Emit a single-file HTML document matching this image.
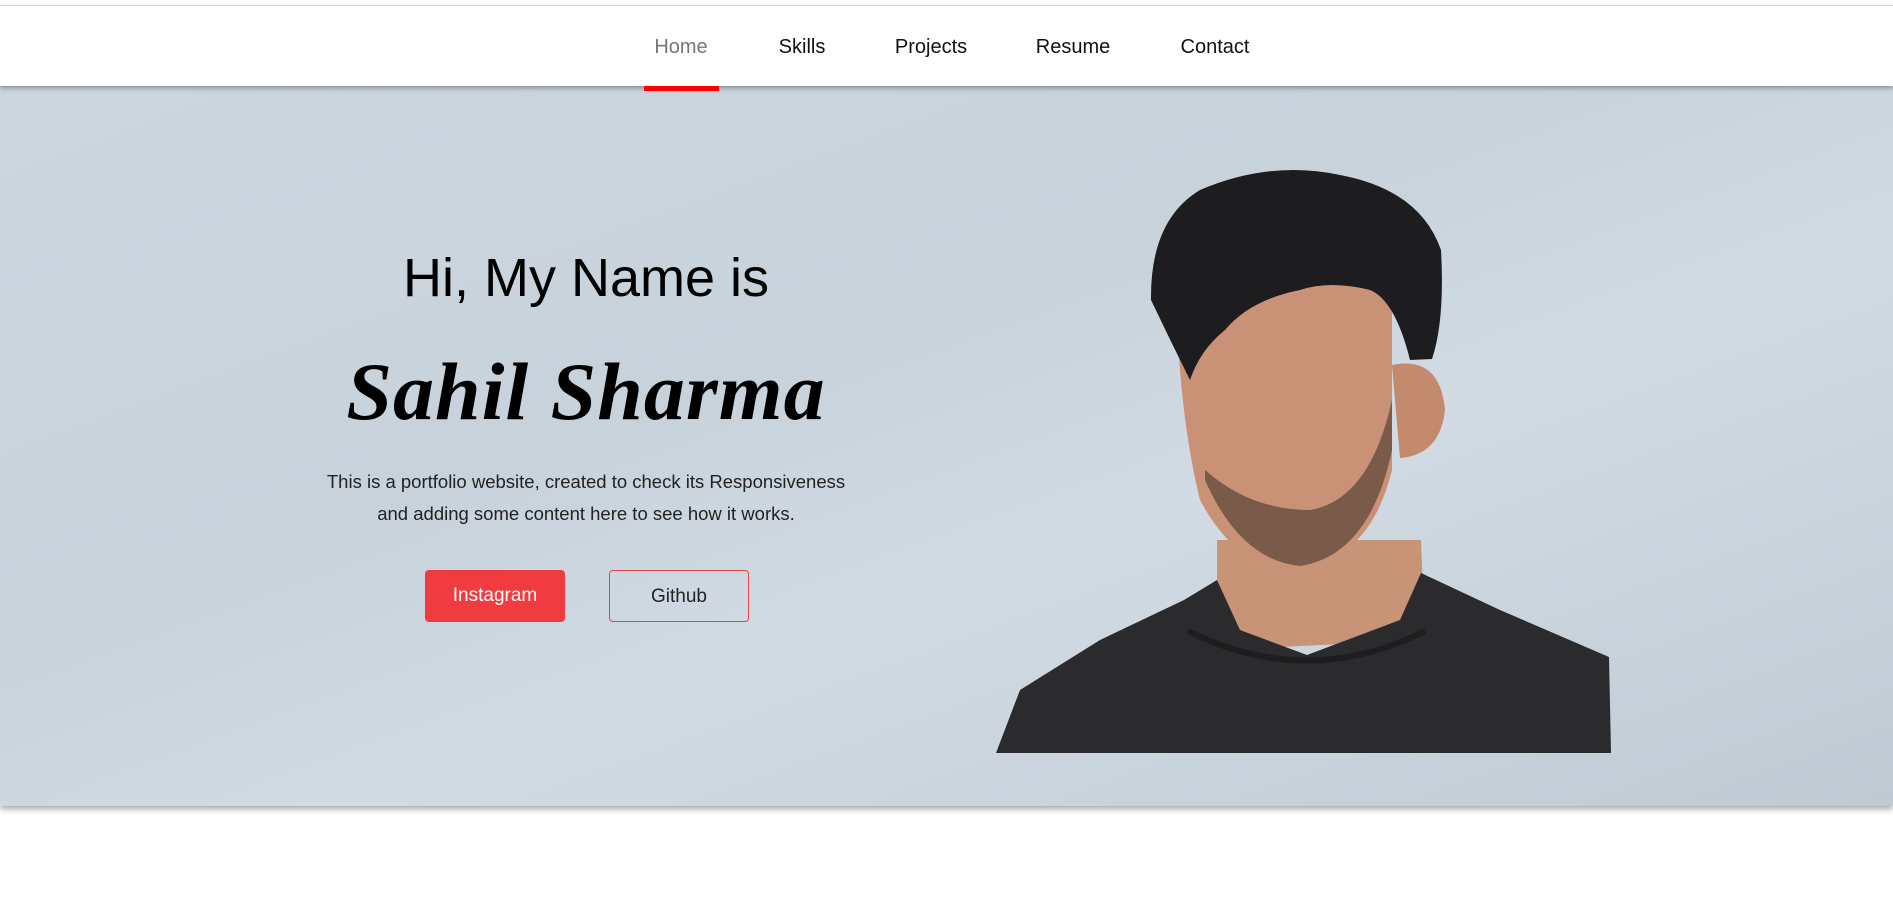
<!DOCTYPE html>
<html><head><meta charset="utf-8"><style>
html,body{margin:0;padding:0;width:1893px;height:915px;overflow:hidden;background:#fff;font-family:"Liberation Sans",sans-serif}
.topline{position:absolute;left:0;top:5px;width:1893px;height:1px;background:#ddd}
nav{position:absolute;left:0;top:6px;width:1893px;height:80px;background:#fff;z-index:3;box-shadow:0 2px 5px rgba(0,0,0,.35)}
nav a{position:absolute;top:30px;font-size:20px;color:#111;text-decoration:none;transform:translateX(-50%)}
.ul{position:absolute;left:644px;top:86px;width:75px;height:5px;background:#f00;z-index:4}
.hero{position:absolute;left:0;top:86px;width:1893px;height:720px;background:linear-gradient(160deg,#cdd6df 0%,#c8d2db 40%,#d2dbe4 60%,#bfcad4 100%);box-shadow:0 3px 6px rgba(0,0,0,.35)}
.t{position:absolute;left:0;width:1172px;text-align:center;color:#000}
.btn{position:absolute;top:570px;height:52px;line-height:52px;text-align:center;font-size:19px;border-radius:4px;box-sizing:border-box}
</style></head><body>
<div class="topline"></div>
<nav>
<a style="left:681px;color:#777">Home</a>
<a style="left:802px">Skills</a>
<a style="left:931px">Projects</a>
<a style="left:1073px">Resume</a>
<a style="left:1215px">Contact</a>
</nav>
<div class="ul"></div>
<div class="hero"></div>
<div class="t" style="top:247px;font-size:54px">Hi, My Name is</div>
<div class="t" style="top:345px;font-size:82px;font-family:'Liberation Serif',serif;font-style:italic;font-weight:bold;letter-spacing:1px">Sahil Sharma</div>
<div class="t" style="top:466px;font-size:18.5px;line-height:32px;color:#222">This is a portfolio website, created to check its Responsiveness<br>and adding some content here to see how it works.</div>
<div class="btn" style="left:425px;width:140px;background:#f03c41;color:#fff">Instagram</div>
<div class="btn" style="left:609px;width:140px;border:1px solid #e04848;color:#222">Github</div>
<svg style="position:absolute;left:0;top:0" width="1893" height="915">
<path d="M1217,540 L1421,540 L1425,640 L1217,650 Z" fill="#c89478"/>
<path d="M996,753 L1020,690 L1100,640 L1184,600 L1217,580 L1240,630 L1307,655 L1400,620 L1421,573 L1500,610 L1609,657 L1611,753 Z" fill="#2b2b2d"/>
<path d="M1188,631 Q1307,690 1425,631" stroke="#1e1e20" stroke-width="6" fill="none"/>
<path d="M1176,300 Q1180,420 1200,500 Q1240,575 1300,566 Q1370,560 1392,470 L1392,300 Q1300,240 1176,300 Z" fill="#c99176"/>
<path d="M1392,365 Q1440,355 1445,410 Q1440,455 1400,458 Z" fill="#c48a6e"/>
<path d="M1205,480 Q1240,560 1300,566 Q1370,555 1392,450 L1392,400 Q1370,500 1310,510 Q1250,510 1205,470 Z" fill="#7a5a48"/>
<path d="M1151,300 Q1150,220 1200,190 Q1270,160 1340,175 Q1420,190 1441,250 Q1445,320 1432,359 L1410,360 Q1395,300 1370,290 Q1330,280 1300,290 Q1250,300 1225,330 Q1200,350 1190,380 Q1170,340 1151,300 Z" fill="#1d1c1e"/>
</svg>
</body></html>
